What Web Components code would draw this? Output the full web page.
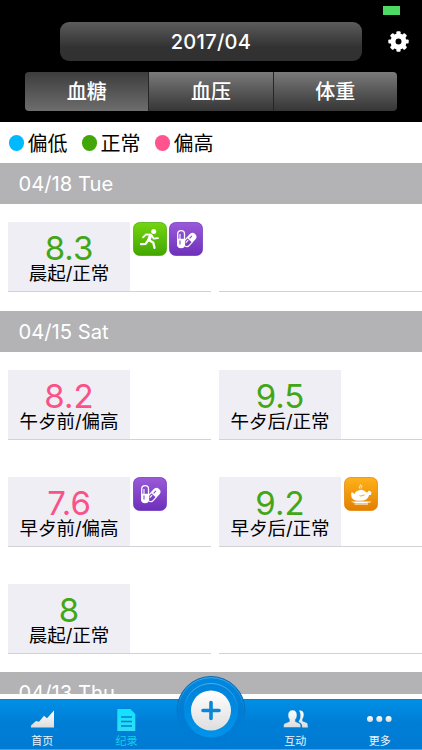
<!DOCTYPE html>
<html lang="zh-CN">
<head>
<meta charset="utf-8">
<title>纪录</title>
<style>
  body {
    margin: 0;
    background: #fff;
    font-family: Inter, "Noto Sans CJK SC", sans-serif;
  }
</style>
</head>
<body>
<health-app>
  <app-header slot="header" month="2017/04">
    <seg-tab active>血糖</seg-tab>
    <seg-tab>血压</seg-tab>
    <seg-tab>体重</seg-tab>
  </app-header>

  <level-legend slot="legend">
    <legend-item color="#00b9ff">偏低</legend-item>
    <legend-item color="#43a608">正常</legend-item>
    <legend-item color="#ff5490">偏高</legend-item>
  </level-legend>

  <day-section day="04/18 Tue">
    <glucose-record value="8.3" level="normal" icons="run pill">晨起/正常</glucose-record>
    <glucose-record></glucose-record>
  </day-section>
  <day-section day="04/15 Sat">
    <glucose-record value="8.2" level="high">午歺前/偏高</glucose-record>
    <glucose-record value="9.5" level="normal">午歺后/正常</glucose-record>
    <glucose-record value="7.6" level="high" icons="pill">早歺前/偏高</glucose-record>
    <glucose-record value="9.2" level="normal" icons="meal">早歺后/正常</glucose-record>
    <glucose-record value="8" level="normal">晨起/正常</glucose-record>
    <glucose-record></glucose-record>
  </day-section>
  <day-section day="04/13 Thu"></day-section>

  <tab-bar slot="tabs">
    <tab-item icon="chart">首页</tab-item>
    <tab-item icon="log" active>纪录</tab-item>
    <add-button></add-button>
    <tab-item icon="people">互动</tab-item>
    <tab-item icon="more">更多</tab-item>
  </tab-bar>
</health-app>

<script>
const makeTemplate = (html) => {
  const template = document.createElement("template");
  template.innerHTML = html;
  return template;
};

class BaseElement extends HTMLElement {
  constructor() {
    super();
    this.shadow = this.attachShadow({ mode: "open" });
    this.shadow.append(this.constructor.template.content.cloneNode(true));
  }
}

class HealthApp extends BaseElement {
  static template = makeTemplate(`
<style>
  :host {
    display: flex;
    flex-direction: column;
    width: 422px;
    height: 750px;
    overflow: hidden;
  }

  main {
    flex: 1;
    min-height: 0;
    overflow: hidden;
  }
</style>
<slot name="header"></slot>
<slot name="legend"></slot>
<main><slot></slot></main>
<slot name="tabs"></slot>
`);
}

class AppHeader extends BaseElement {
  static template = makeTemplate(`
<style>
  :host {
    display: flex;
    flex-direction: column;
    box-sizing: border-box;
    height: 122px;
    flex: none;
    background: #000;
    color: #fff;
  }

  .status {
    display: flex;
    justify-content: flex-end;
    height: 15px;
    padding: 6px 22px 0 0;
    box-sizing: border-box;
  }

  .battery {
    width: 17px;
    height: 9px;
    background: #4cd964;
  }

  .title {
    display: grid;
    grid-template-columns: 1fr 302px 1fr;
    align-items: center;
    height: 39px;
    margin-top: 7px;
  }

  .month {
    grid-column: 2;
    height: 39px;
    border-radius: 9px;
    background: linear-gradient(#5c5c5c, #323232 65%, #303030);
    font-size: 20px;
    font-weight: 500;
    line-height: 40px;
    text-align: center;
    letter-spacing: 0.3px;
  }

  svg {
    margin-left: 26px;
    display: block;
  }

  .tabs {
    display: flex;
    width: 372px;
    height: 39px;
    margin: 11px 0 0 25px;
    border-radius: 4px;
    overflow: hidden;
  }
</style>
<div class="status"><div class="battery"></div></div>
<div class="title">
  <div class="month"></div>
  <svg width="21" height="21" viewBox="-10.5 -10.5 21 21" fill="#fff">
    <g id="teeth"></g>
    <circle r="5.5" fill="none" stroke="#fff" stroke-width="5"/>
  </svg>
</div>
<div class="tabs"><slot></slot></div>
`);

  connectedCallback() {
    this.shadow.querySelector(".month").textContent = this.getAttribute("month");
    let teeth = "";
    for (let i = 0; i < 8; i++) {
      teeth += `<rect x="-2.1" y="-10.2" width="4.2" height="4" rx="1" transform="rotate(${i * 45})"/>`;
    }
    this.shadow.querySelector("#teeth").innerHTML = teeth;
  }
}

class SegTab extends BaseElement {
  static template = makeTemplate(`
<style>
  :host {
    flex: 1;
    box-sizing: border-box;
    border-right: 1px solid #262626;
    background: linear-gradient(#7b7b7b, #5a5a5a 45%, #363636);
    font-size: 20px;
    font-weight: 500;
    line-height: 41px;
    text-align: center;
  }

  :host([active]) {
    background: linear-gradient(#3d3d3d, #6d6d6d);
  }

  :host(:last-child) {
    border-right: none;
  }
</style>
<slot></slot>
`);
}

class LevelLegend extends BaseElement {
  static template = makeTemplate(`
<style>
  :host {
    display: flex;
    flex: none;
    gap: 14px;
    height: 41px;
    padding-left: 8.5px;
    align-items: center;
  }
</style>
<slot></slot>
`);
}

class LegendItem extends BaseElement {
  static template = makeTemplate(`
<style>
  :host {
    display: flex;
    align-items: center;
    gap: 3.5px;
    font-size: 20px;
    line-height: 38px;
  }

  i {
    width: 15.5px;
    height: 15.5px;
    margin-top: 1px;
    border-radius: 50%;
  }

  span {
    padding-top: 3px;
  }
</style>
<i></i><span><slot></slot></span>
`);

  connectedCallback() {
    this.shadow.querySelector("i").style.background = this.getAttribute("color");
  }
}

class DaySection extends BaseElement {
  static template = makeTemplate(`
<style>
  :host {
    display: block;
  }

  header {
    height: 41px;
    padding-left: 18.5px;
    background: #b3b3b5;
    color: #fff;
    font-size: 20.2px;
    line-height: 42px;
  }

  .rows {
    display: grid;
    grid-template-columns: 203px 203px;
    grid-auto-rows: 107px;
    column-gap: 8px;
    padding-left: 8px;
    margin-bottom: -0.4px;
  }
</style>
<header></header>
<div class="rows"><slot></slot></div>
`);

  connectedCallback() {
    this.shadow.querySelector("header").textContent = this.getAttribute("day");
  }
}

const badges = {
  run: {
    colors: ["#74d512", "#43a600"],
    art: `<circle cx="20.7" cy="9.6" r="2.5" fill="#fff"/>
      <g fill="none" stroke="#fff" stroke-linecap="round" stroke-linejoin="round">
        <path stroke-width="3.4" d="M17.5 13.6L15.8 18"/>
        <path stroke-width="1.8" d="M17.8 12.6L13 12.3L10 15.4M18.8 13.4L20.6 16.6L25 16.2"/>
        <path stroke-width="2.3" d="M16.3 18.2L20.3 20.8L21.5 25.8M15 18.4L12.6 21.8L8 22.2"/>
      </g>`
  },
  pill: {
    colors: ["#9a5ad8", "#6d30ba"],
    art: `<g fill="none" stroke="#fff" stroke-width="1.3">
        <rect x="8.7" y="8.6" width="6.8" height="17" rx="3.4"/>
        <path fill="#fff" d="M9 17.5h6.200v4.500a3 3 0 0 1-6.200 0z"/>
        <path stroke="#8a4acb" stroke-width="1.1" d="M11 18.500v4"/>
        <path stroke-width="1.1" d="M11 12v5"/>
        <g transform="translate(20.800 17.800) rotate(42) scale(.88)">
          <path fill="#fff" d="M-3.800 0v-4.500a3.800 3.800 0 0 1 7.600 0v4.500z"/>
          <path d="M-3.800 0v5a3.800 3.800 0 0 0 7.600 0v-5"/>
          <path stroke-width="1.2" d="M-1.200 1.500v4"/>
          <path stroke="#8444c5" stroke-width="1.1" d="M-1.200-5v4"/>
        </g>
      </g>`
  },
  meal: {
    colors: ["#ffb21a", "#e27f00"],
    art: `<g fill="#fff">
        <path d="M7.2 15.8c1.3-.6 2.6 0 3 1.4 1.2-2.5 3.2-4.1 6-4.3 2.5-.2 4.5.8 6.1 2.7l1.7-.5c-.2-1.3 1.1-2 2-.9 1.3.2 1.8 1.2 1.2 2 .4 1.3-.7 2.2-2 1.6-.8 3.6-3.2 5.8-7.2 6h-4.8c-3.4-.2-5.7-2.2-5.9-5z"/>
        <path d="M7 24.6h20.5c-1.2 1.1-3 1.2-4.5 1.3H11.5c-1.6-.1-3.2-.3-4.5-1.3zM10.5 26.6h13.5v.8H10.5z"/>
      </g>
      <path d="M15.800 11.500c-1.500-1.500 1-2 .6-4M17.600 11.300c-1-1.200.7-1.500.2-2.800" fill="none" stroke="#fff"/>
      <path d="M15.5 18.6c1.5 1.2 3.2-.5 5.2-.7" fill="none" stroke="#ef9810" stroke-width=".9"/>`
  }
};

class ActivityBadge extends BaseElement {
  static template = makeTemplate(`
<style>
  :host {
    display: block;
    width: 34px;
    height: 34px;
  }

  svg {
    display: block;
  }
</style>
<svg width="34" height="34" viewBox="0 0 34 34"></svg>
`);

  connectedCallback() {
    const { colors, art } = badges[this.getAttribute("kind")];
    this.shadow.querySelector("svg").innerHTML = `
      <linearGradient id="fill" x2="0" y2="1">
        <stop stop-color="${colors[0]}"/><stop offset="1" stop-color="${colors[1]}"/>
      </linearGradient>
      <rect x=".5" y=".5" width="33" height="33" rx="6" fill="url(#fill)" stroke="${colors[1]}" stroke-opacity=".7"/>
      ${art}`;
  }
}

class GlucoseRecord extends BaseElement {
  static template = makeTemplate(`
<style>
  :host {
    display: flex;
    box-sizing: border-box;
    height: 70px;
    margin-top: 18px;
    border-bottom: 1px solid #d2d2d6;
  }

  .tile {
    display: none;
    width: 122px;
    background: #efeef5;
    text-align: center;
  }

  :host([value]) .tile {
    display: block;
  }

  .value {
    height: 39px;
    padding-top: 13px;
    box-sizing: border-box;
    font-size: 33px;
    line-height: 26px;
    color: #43a617;
  }

  :host([level="high"]) .value {
    color: #fa5288;
  }

  .label {
    font-size: 18.5px;
    line-height: 25px;
    white-space: nowrap;
  }

  .badges {
    display: flex;
    gap: 2.5px;
    margin-left: 2.5px;
  }
</style>
<div class="tile">
  <div class="value"></div>
  <div class="label"><slot></slot></div>
</div>
<div class="badges"></div>
`);

  connectedCallback() {
    this.shadow.querySelector(".value").textContent = this.getAttribute("value") || "";
    const icons = (this.getAttribute("icons") || "").split(" ").filter(Boolean);
    this.shadow.querySelector(".badges").innerHTML =
      icons.map((kind) => `<activity-badge kind="${kind}"></activity-badge>`).join("");
  }
}

class TabBar extends BaseElement {
  static template = makeTemplate(`
<style>
  :host {
    display: grid;
    grid-template-columns: repeat(5, 84.4px);
    box-sizing: border-box;
    flex: none;
    height: 51px;
    margin-top: 5px;
    border-top: 1px solid #2878ad;
    border-bottom: 1px solid #4b9fdc;
    background: linear-gradient(#008fe6, #007ed6 45%, #007bd3);
    position: relative;
  }
</style>
<slot></slot>
`);
}

const tabIcons = {
  chart: `<path d="M1 19.5v-2l5-4.5 3 .8 5-6 3 2.4L24 2.5v17z"/>`,
  log: `<path d="M3.3 1h13l5 5v17h-18z"/>
    <path d="M7 9h11M7 13.5h11M7 18h11" stroke="#007fd6" stroke-width="1.5"/>`,
  people: `<path d="M16 2.8c2.5-.8 4.8.8 4.7 3.8 0 2-.7 3.5-1.4 4.6v2l4.5 1.9c.8.5 1 1.800 1 4.400h-5.500c-.2-2-.7-4-2-4.700l-1.800-.9c1-2 2-3.500 2-6 0-2-.3-3.700-1.500-5.100z"/>
    <path d="M9.500 2c3 0 4.600 2 4.500 5 0 2.100-.7 3.500-1.600 4.600v1.900l4.200 1.900c1.100.6 1.200 1.700 1.200 4.100H.5c0-2.500.2-3.600 1.200-4.100l4.700-1.900v-2C5.500 10.500 5 8.700 5 7c0-3 1.700-5 4.500-5z" stroke="#007fd6" stroke-width=".5"/>`,
  more: `<circle cx="3" cy="11" r="3"/><circle cx="12.3" cy="11" r="3"/><circle cx="21.6" cy="11" r="3"/>`
};

class TabItem extends BaseElement {
  static template = makeTemplate(`
<style>
  :host {
    display: flex;
    flex-direction: column;
    align-items: center;
    padding-top: 8px;
    color: #e8f5ff;
    font-size: 11px;
    line-height: 16px;
  }

  :host([active]) {
    color: #19cbed;
  }

  svg {
    display: block;
    height: 24px;
    margin-bottom: 1px;
  }
</style>
<svg width="25" height="24" viewBox="0 0 25 24"></svg>
<span><slot></slot></span>
`);

  connectedCallback() {
    const colors = this.hasAttribute("active") ? ["#12e2ff", "#2fdcf5"] : ["#fff", "#dcdcdc"];
    this.shadow.querySelector("svg").innerHTML = `
      <linearGradient id="tint" x2="0" y2="1">
        <stop stop-color="${colors[0]}"/><stop offset="1" stop-color="${colors[1]}"/>
      </linearGradient>
      <g fill="url(#tint)">${tabIcons[this.getAttribute("icon")]}</g>`;
  }
}

class AddButton extends BaseElement {
  static template = makeTemplate(`
<style>
  :host {
    display: block;
    position: relative;
  }

  /* the round button rises above the bar */
  svg {
    position: absolute;
    left: 5px;
    top: -27px;
  }
</style>
<svg width="74" height="77" viewBox="0 0 74 77">
  <defs>
    <linearGradient id="ring" x2="0" y2="1">
      <stop stop-color="#0089df"/><stop offset=".5" stop-color="#007dd5"/><stop offset="1" stop-color="#007bd3"/>
    </linearGradient>
    <linearGradient id="edge" x2="0" y2="1">
      <stop stop-color="#1269aa"/><stop offset=".35" stop-color="#1269aa"/><stop offset=".6" stop-color="#007cd4"/>
    </linearGradient>
    <linearGradient id="shine" x2="0" y2="1">
      <stop stop-color="#4bb0ee"/><stop offset=".5" stop-color="#4bb0ee" stop-opacity="0"/>
    </linearGradient>
    <linearGradient id="inner" x2="0" y2="1">
      <stop stop-color="#0082d9"/><stop offset="1" stop-color="#0094ea"/>
    </linearGradient>
    <linearGradient id="knob" x2="0" y2="1">
      <stop stop-color="#fff"/><stop offset="1" stop-color="#dedede"/>
    </linearGradient>
  </defs>
  <circle cx="37" cy="37.5" r="34" fill="url(#ring)" stroke="url(#edge)"/>
  <circle cx="37" cy="37.5" r="32.8" fill="none" stroke="url(#shine)" stroke-width=".8"/>
  <circle cx="37" cy="37.5" r="27" fill="url(#inner)" stroke="url(#shine)"/>
  <circle cx="37" cy="37.5" r="20" fill="url(#knob)"/>
  <path d="M37 29.5v16M29 37.500h16" stroke="#0a86d8" stroke-width="3.6" stroke-linecap="round"/>
</svg>
`);
}

customElements.define("health-app", HealthApp);
customElements.define("app-header", AppHeader);
customElements.define("seg-tab", SegTab);
customElements.define("level-legend", LevelLegend);
customElements.define("legend-item", LegendItem);
customElements.define("day-section", DaySection);
customElements.define("activity-badge", ActivityBadge);
customElements.define("glucose-record", GlucoseRecord);
customElements.define("tab-bar", TabBar);
customElements.define("tab-item", TabItem);
customElements.define("add-button", AddButton);
</script>
</body>
</html>
